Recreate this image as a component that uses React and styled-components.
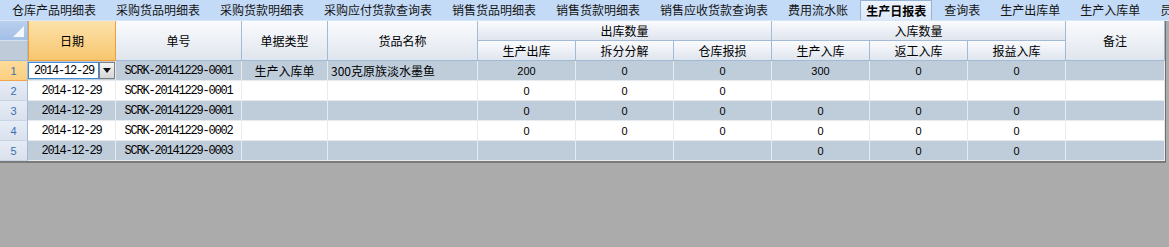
import React from "react";
import styled, { createGlobalStyle, css } from "styled-components";

const GlobalStyle = createGlobalStyle`
  html, body {
    margin: 0;
    padding: 0;
    background: #ababab;
  }
  * {
    box-sizing: border-box;
  }
`;

const cjk = `"Noto Sans CJK SC", "Noto Sans", sans-serif`;

const tabs = [
  "仓库产品明细表",
  "采购货品明细表",
  "采购货款明细表",
  "采购应付货款查询表",
  "销售货品明细表",
  "销售货款明细表",
  "销售应收货款查询表",
  "费用流水账",
  "生产日报表",
  "查询表",
  "生产出库单",
  "生产入库单",
  "员工",
];
const activeTab = "生产日报表";

const rows = [
  {
    date: "2014-12-29",
    no: "SCRK-20141229-0001",
    type: "生产入库单",
    name: "300克原族淡水墨鱼",
    out: ["200", "0", "0"],
    in: ["300", "0", "0"],
  },
  { date: "2014-12-29", no: "SCRK-20141229-0001", out: ["0", "0", "0"], in: ["", "", ""] },
  { date: "2014-12-29", no: "SCRK-20141229-0001", out: ["0", "0", "0"], in: ["0", "0", "0"] },
  { date: "2014-12-29", no: "SCRK-20141229-0002", out: ["0", "0", "0"], in: ["0", "0", "0"] },
  { date: "2014-12-29", no: "SCRK-20141229-0003", out: ["", "", ""], in: ["0", "0", "0"] },
];

export default function App() {
  return (
    <>
      <GlobalStyle />
      <Frame>
        <TabBar>
          {tabs.map((t) => (
            <Tab key={t} $active={t === activeTab}>
              {t}
            </Tab>
          ))}
        </TabBar>
        <SheetArea>
          <Grid>
            <Corner />
            <HeadCell $date $rows={2}>日期</HeadCell>
            <HeadCell $rows={2}>单号</HeadCell>
            <HeadCell $rows={2}>单据类型</HeadCell>
            <HeadCell $rows={2}>货品名称</HeadCell>
            <HeadCell $cols={3}>出库数量</HeadCell>
            <HeadCell $cols={3}>入库数量</HeadCell>
            <HeadCell $rows={2}>备注</HeadCell>
            <CornerLower />
            <HeadCell>生产出库</HeadCell>
            <HeadCell>拆分分解</HeadCell>
            <HeadCell>仓库报损</HeadCell>
            <HeadCell>生产入库</HeadCell>
            <HeadCell>返工入库</HeadCell>
            <HeadCell>报益入库</HeadCell>

            {rows.map((r, i) => {
              const alt = i % 2 === 0;
              return (
                <React.Fragment key={i}>
                  <RowHead $current={i === 0}>{i + 1}</RowHead>
                  {i === 0 ? (
                    <EditCell $alt={alt}>
                      <DateInput>{r.date}</DateInput>
                      <DropButton>
                        <svg width="8" height="5" viewBox="0 0 8 5">
                          <path d="M0 0 L8 0 L4 5 Z" fill="#111" />
                        </svg>
                      </DropButton>
                    </EditCell>
                  ) : (
                    <Cell $alt={alt} $mono>
                      {r.date}
                    </Cell>
                  )}
                  <Cell $alt={alt} $mono>
                    {r.no}
                  </Cell>
                  <Cell $alt={alt}>{r.type}</Cell>
                  <Cell $alt={alt} $left>
                    {r.name}
                  </Cell>
                  {r.out.map((v, j) => (
                    <Cell key={"o" + j} $alt={alt} $num>
                      {v}
                    </Cell>
                  ))}
                  {r.in.map((v, j) => (
                    <Cell key={"i" + j} $alt={alt} $num>
                      {v}
                    </Cell>
                  ))}
                  <Cell $alt={alt} />
                </React.Fragment>
              );
            })}
          </Grid>
        </SheetArea>
      </Frame>
    </>
  );
}

const Frame = styled.div`
  width: 1169px;
  height: 247px;
  display: flex;
  flex-direction: column;
  overflow: hidden;
`;

const TabBar = styled.div`
  height: 21px;
  flex: none;
  display: flex;
  align-items: stretch;
  padding-left: 2px;
  background: #c4dbf7;
  border-bottom: 1px solid #d8e6f6;
  white-space: nowrap;
  overflow: hidden;
`;

const Tab = styled.div`
  flex: none;
  display: flex;
  align-items: center;
  padding: 0 10px;
  font-family: ${cjk};
  font-size: 12px;
  color: #141414;
  line-height: 1;

  ${(p) =>
    p.$active &&
    css`
      margin: 0 2px;
      padding: 0 5px;
      font-weight: bold;
      background: linear-gradient(#eef4fc, #dbe7f7);
      border: 1px solid #93b3d9;
      border-bottom: none;
      color: #000;
    `}
`;

const SheetArea = styled.div`
  flex: 1;
  background: #ababab;
`;

const Grid = styled.div`
  display: grid;
  width: 1166px;
  grid-template-columns: 28px 88px 126px 86px 150px repeat(6, 98px) 99px;
  grid-template-rows: repeat(7, 20px);
  border-right: 1px solid #6f6f6f;
  border-bottom: 2px solid #7a7a7a;
  background: #fff;
`;

const Corner = styled.div`
  position: relative;
  background: linear-gradient(#b9d0ee, #a3c0e7);
  border-right: 1px solid #9fb8d5;
  border-bottom: 1px solid #d6e1ee;

  &::after {
    content: "";
    position: absolute;
    right: 3px;
    bottom: 3px;
    width: 0;
    height: 0;
    border-left: 11px solid transparent;
    border-bottom: 11px solid #f4f7fb;
  }
`;

const CornerLower = styled.div`
  grid-column: 1;
  background: #bfcbd8;
  border-right: 1px solid #9fb8d5;
  border-bottom: 1px solid #9fb8d5;
`;

const HeadCell = styled.div`
  grid-row: span ${(p) => p.$rows || 1};
  grid-column: span ${(p) => p.$cols || 1};
  display: flex;
  align-items: center;
  justify-content: center;
  font-family: ${cjk};
  font-size: 12px;
  color: #000;
  background: linear-gradient(#fafbfd, #dfe5ee);
  border-right: 1px solid #a2bad5;
  border-bottom: 1px solid #a2bad5;

  ${(p) =>
    p.$date &&
    css`
      background: linear-gradient(#fde2ab, #f6c66e);
      border-left: 1px solid #f39c3b;
      border-right: 1px solid #f39c3b;
      border-bottom: 1px solid #f39c3b;
    `}
`;

const RowHead = styled.div`
  grid-column: 1;
  display: flex;
  align-items: center;
  justify-content: center;
  font-family: "Liberation Sans", sans-serif;
  font-size: 11px;
  color: #3a6fb2;
  background: ${(p) => (p.$current ? "linear-gradient(#fddb9a, #fbcf80)" : "linear-gradient(#e6ecf5, #dae2ee)")};
  border-right: 1px solid #9fb8d5;
  border-bottom: 1px solid ${(p) => (p.$current ? "#f2a54a" : "#c9d5e4")};
`;

const monoText = css`
  font-family: "Liberation Mono", monospace;
  font-size: 12px;
  letter-spacing: -1.2px;
  color: #000;
`;

const Cell = styled.div`
  display: flex;
  align-items: center;
  justify-content: ${(p) => (p.$left ? "flex-start" : "center")};
  padding-left: ${(p) => (p.$left ? "3px" : "0")};
  overflow: hidden;
  white-space: nowrap;
  background: ${(p) => (p.$alt ? "#bfcddb" : "#ffffff")};
  border-right: 1px solid ${(p) => (p.$alt ? "#e7ebf0" : "#ebebeb")};
  border-bottom: 1px solid #e6e9ed;
  color: #000;
  font-family: ${cjk};
  font-size: 12px;

  ${(p) => p.$mono && monoText}

  ${(p) =>
    p.$num &&
    css`
      font-family: "Liberation Sans", sans-serif;
      font-size: 11px;
    `}
`;

const EditCell = styled.div`
  display: flex;
  align-items: stretch;
  padding: 1px 0;
  background: ${(p) => (p.$alt ? "#bfcddb" : "#ffffff")};
  border-right: 1px solid #e7ebf0;
  border-bottom: 1px solid #e6e9ed;
`;

const DateInput = styled.div`
  width: 72px;
  display: flex;
  align-items: center;
  padding-left: 5px;
  background: #fff;
  border: 1px solid #3d8ad6;
  ${monoText}
`;

const DropButton = styled.div`
  width: 16px;
  display: flex;
  align-items: center;
  justify-content: center;
  background: linear-gradient(#f4f4f4, #d6d6d6);
  border: 1px solid #7f7f7f;
`;
